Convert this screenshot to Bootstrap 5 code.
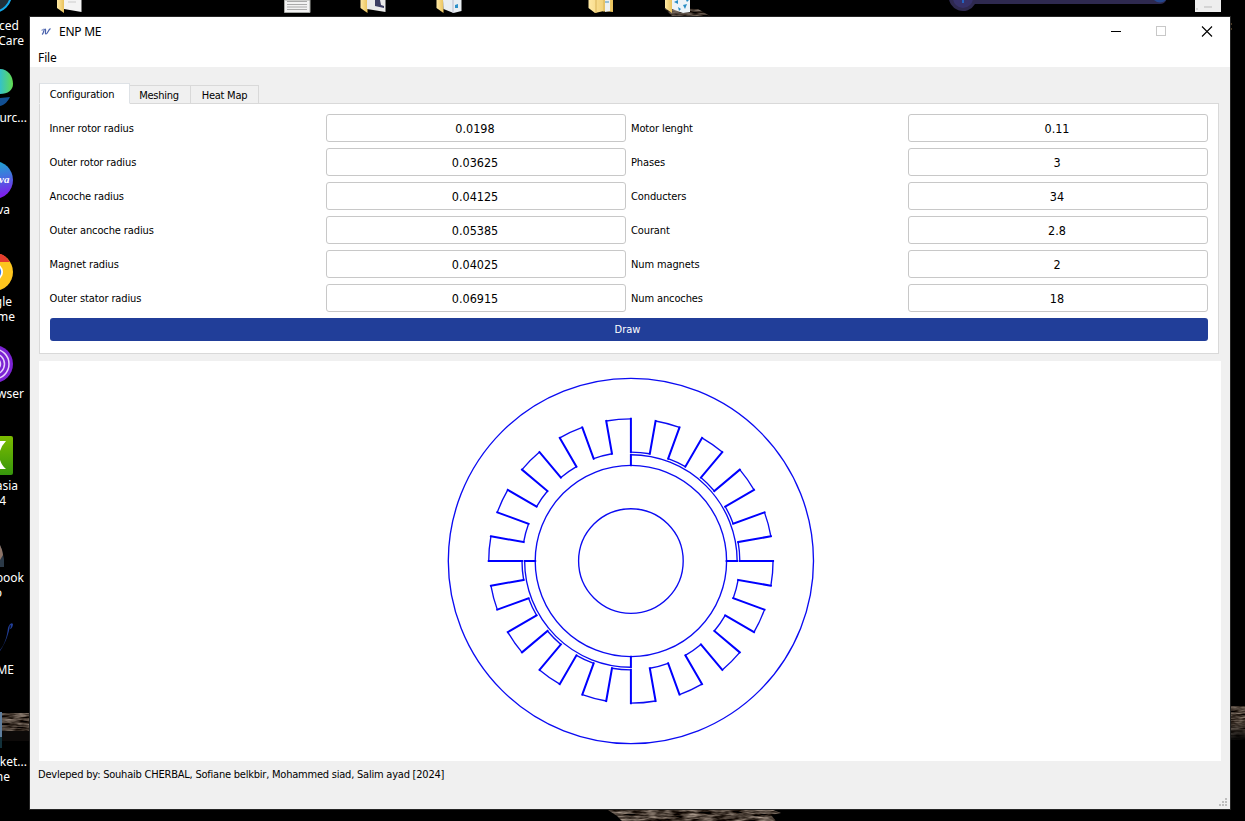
<!DOCTYPE html>
<html lang="en">
<head>
<meta charset="utf-8">
<title>ENP ME</title>
<link href="https://cdn.jsdelivr.net/npm/bootstrap@5.3.0/dist/css/bootstrap.min.css" rel="stylesheet">
<style>
body{width:1245px;height:821px;background:#000;font-family:"DejaVu Sans Condensed","DejaVu Sans",sans-serif;font-stretch:condensed;font-size:11px;line-height:14px;color:#000}
.desktop{width:1245px;height:821px}
.wall{left:0;top:0}
.desk-label{font:12px/15px "Noto Sans","Open Sans",sans-serif;color:#fff;white-space:pre;text-align:right}
.app{left:30px;top:17px;width:1200px;height:792px;background:#f0f0f0;outline:1px solid #252525}
.titlebar{height:30px;font:12px/30px "Noto Sans","Open Sans",sans-serif}
.titlebar .app-name{margin-left:9px;letter-spacing:-.25px}
.menubar{height:20px;font:12px/22px "Noto Sans","Open Sans",sans-serif;padding-left:8px;letter-spacing:-.1px}
.tabs-row{margin:16px 0 0 9px;height:21px}
.nav-tabs.tabs-row{border:0}
.tabs-row .nav-link{border:1px solid #d9d9d9;border-left:0;border-radius:0;margin:0;padding:0 2px 0 0;color:#000;height:19px;line-height:19px;text-align:center;letter-spacing:-.25px;background:#f0f0f0}
.tabs-row .nav-link.active{width:91px;height:21px;line-height:21px;border-left:1px solid #d9d9d9;border-bottom-color:#fff;background:#fff;color:#000;z-index:1;padding-right:5px;letter-spacing:-.2px}
.pane{margin:-1px 11px 0 9px;height:251px;border:1px solid #d9d9d9;background:#fff;padding:10px}
.fields{display:grid;grid-template-columns:276px 300px 282px 300px;grid-auto-rows:28px;row-gap:6px}
.fields label{line-height:30px;letter-spacing:-.12px;margin-left:-.5px}
.fields label.second{padding-left:5.5px}
.fields .form-control{height:28px;min-height:0;padding:0 2px 0 0;border:1px solid #c8c8c8;border-radius:3px;text-align:center;font-size:12.5px;line-height:26px;color:#000}
.btn-draw{margin-top:6px;height:23px;width:100%;padding:0 3px 0 0;border:0;border-radius:3px;background:#213e99;color:#fff;font-size:11px;line-height:24px}
.plot{margin:7px 9px 0 9px;height:400px;background:#fff}
.credits{padding:7px 0 0 8px;letter-spacing:-.22px}
.grip{right:2px;bottom:2px}
</style>
</head>
<body>
<div class="desktop position-relative overflow-hidden">
<svg class="wall position-absolute" width="1245" height="821" viewBox="0 0 1245 821">
  <defs>
    <linearGradient id="edge" x1="0" x2="1"><stop offset="0" stop-color="#35c1c9"/><stop offset="1" stop-color="#62dc50"/></linearGradient>
    <linearGradient id="canva" x1="0" y1="0" x2=".2" y2="1"><stop offset="0" stop-color="#12b5cc"/><stop offset=".5" stop-color="#3f77dd"/><stop offset="1" stop-color="#7d20ec"/></linearGradient>
    <linearGradient id="green" x1="0" y1="0" x2="0" y2="1"><stop offset="0" stop-color="#7cbc00"/><stop offset="1" stop-color="#36960c"/></linearGradient>
    <linearGradient id="folder" x1="0" x2="1"><stop offset="0" stop-color="#ffe9a5"/><stop offset="1" stop-color="#e9c25c"/></linearGradient>
    <linearGradient id="shade" x1="0" y1="0" x2="0" y2="1"><stop offset="0" stop-color="#000" stop-opacity="0"/><stop offset="1" stop-color="#000"/></linearGradient>
    <filter id="rock" x="0" y="0" width="1" height="1" color-interpolation-filters="sRGB"><feTurbulence type="fractalNoise" baseFrequency=".07 .42" numOctaves="3" seed="4"/><feColorMatrix values="1.1 0 0 0 -.26  1.05 0 0 0 -.28  1 0 0 0 -.29  0 0 0 0 1"/><feComposite in2="SourceGraphic" operator="in"/></filter>
  </defs>
  <!-- wallpaper rocks -->
  <rect x="0" y="713" width="30" height="18" fill="#54453d" filter="url(#rock)"/>
  <rect y="731" width="30" height="10" fill="#0d0a09"/>
  <rect x="1231" y="706" width="14" height="34" fill="#54453d" filter="url(#rock)"/>
  <rect x="1231" y="722" width="14" height="19" fill="url(#shade)"/>
  <path d="M608 810h165l8 3-10 2 5 6H622l-5-5z" fill="#54453d" filter="url(#rock)"/>
  <path d="M664 8l8 8h38l-12-7z" fill="#54453d" filter="url(#rock)"/>
  <path d="M1230 24h2M1230 29h2M1230 44h1" stroke="#957449"/>
  <!-- left column icons -->
  <circle cx="-7" cy="-6" r="18" fill="#21303a" stroke="#14a9ea" stroke-width="2"/>
  <path d="M0 69c8 0 13 7 13 15 0 6-5 10-13 10z" fill="url(#edge)"/>
  <path d="M0 98c4 0 7-1 10-1-2 4-5 8-10 9z" fill="#114f93"/>
  <circle cx="-6" cy="180" r="19" fill="url(#canva)"/>
  <text x="-1" y="183" font-family="Liberation Serif,serif" font-style="italic" font-weight="bold" font-size="11" fill="#fff">va</text>
  <circle cx="-6" cy="272" r="19" fill="#fdc51e"/>
  <path d="M0 254c5 1 7 4 10 8H0z" fill="#e43c2e"/>
  <circle cx="-6" cy="272" r="9" fill="#fff"/><circle cx="-6" cy="272" r="7.2" fill="#327be8"/>
  <circle cx="-6" cy="364" r="19" fill="#7b22d3"/>
  <g fill="none" stroke="#e7d2fa" stroke-width="1.5"><circle cx="-6" cy="364" r="15"/><circle cx="-6" cy="364" r="10.500"/><circle cx="-6" cy="364" r="6.500"/></g>
  <path d="M0 436h11q2 0 2 2v35q0 2-2 2H0z" fill="url(#green)"/>
  <path d="M0 441h6q-4 4-6 10zM0 460q2 6 6 9H0z" fill="#fff"/>
  <path d="M0 545l2 5 2 9v8H0z" fill="#2b3947"/><path d="M0 545l2 5 1 5-3 5z" fill="#8d7468"/>
  <path d="M0 650c5-6 7-14 8-22 1-3 3-6 5-4 0 3-2 5-3 5 1-2 1-4 0-4-1 8-4 17-10 26z" fill="#213e99"/>
  <path d="M0 712h2v25H0z" fill="#5f7e9e"/><path d="M0 737h2v11H0z" fill="#12303a"/>
  <!-- top row icons -->
  <path d="M57 0h7v13l-7-5z" fill="url(#folder)"/><path d="M64 0h17.500v12L64 9z" fill="#f4f4f4"/><path d="M68 2h8" stroke="#ccc"/>
  <path d="M284.500 0h25.500v12.500h-25.500z" fill="#f2f2f2" stroke="#a8aaa6"/><path d="M287 1.500h20M287 4.500h20M287 7h20M287 9.500h20" stroke="#aaa"/>
  <path d="M360.500 0h7v13l-7-5z" fill="url(#folder)"/><path d="M367 0h18.500v12L367 9z" fill="#e9e9e9"/><path d="M375 0h5l1 5 3 1v2l-9-2z" fill="#3b3d62"/>
  <path d="M436.500 0h7v13l-7-5z" fill="url(#folder)"/><path d="M443 0h18.500v11l-8 2-10-4z" fill="#e9eef2"/><path d="M453 0v13" stroke="#bbc"/><path d="M455 5l3-1v4h-3z" fill="#2e90c8"/>
  <path d="M588.500 0H613v12l-9-1-9 2-6.500-5z" fill="url(#folder)"/><path d="M596 0v13M604 0v12" stroke="#d9b45a"/><path d="M605 0h5v11l-5 1z" fill="#edf0f2"/><path d="M605 2h4" stroke="#4390c0"/>
  <path d="M665 0h7v13l-7-5z" fill="url(#folder)"/><path d="M672 0h18v12l-7 1-11-4z" fill="#edf4f8"/><path d="M674 2l4-2v4zM678 7l3 2-2 2zM683 5l4-1-2 5zM686 0h3l-2 2z" fill="#2a8ec4"/>
  <path d="M949-5a14 14 0 0 0 26 9h185q6 0 7-7z" fill="#2e294f"/><circle cx="963" cy="-2" r="10" fill="#363169"/><path d="M963 0v3" stroke="#2563c0" stroke-width="2"/><path d="M1154 0h12q-6 5-12 0z" fill="#24468e"/>
  <path d="M1195 0h26v12h-26z" fill="#eee"/><path d="M1196 9h2M1204 7h8" stroke="#bbb"/>
</svg>
<div class="desk-label position-absolute" style="right:1226px;top:18px">ced</div>
<div class="desk-label position-absolute" style="right:1221px;top:33px">Care</div>
<div class="desk-label position-absolute" style="right:1218px;top:110px">urc...</div>
<div class="desk-label position-absolute" style="right:1235px;top:202px">va</div>
<div class="desk-label position-absolute" style="right:1233px;top:294px">gle</div>
<div class="desk-label position-absolute" style="right:1230px;top:309px">me</div>
<div class="desk-label position-absolute" style="right:1221px;top:386px">wser</div>
<div class="desk-label position-absolute" style="right:1227px;top:478px">asia</div>
<div class="desk-label position-absolute" style="right:1239px;top:493px">4</div>
<div class="desk-label position-absolute" style="right:1221px;top:570px">book</div>
<div class="desk-label position-absolute" style="right:1243px;top:585px">o</div>
<div class="desk-label position-absolute" style="right:1231px;top:662px">ME</div>
<div class="desk-label position-absolute" style="right:1218px;top:754px">rket...</div>
<div class="desk-label position-absolute" style="right:1235px;top:769px">ne</div>

<main class="app position-absolute">
  <header class="bg-white">
    <div class="titlebar d-flex">
      <svg width="12" height="30" class="ms-2" viewBox="0 0 12 30" style="overflow:visible"><g fill="none" stroke="#4a62ad" stroke-width="1.200"><path d="M4 17.500c2-1 1.500-5.500 3-5.500s-.5 5 1 5 2-4 4.500-5.500"/><path d="M3.500 13.500l2.500-1.500" stroke="#8c9bcc"/></g></svg>
      <span class="app-name">ENP ME</span>
      <svg class="ms-auto" width="120" height="30" viewBox="0 0 120 30"><path d="M1 14.500h10" stroke="#000"/><rect x="46.500" y="9.500" width="9" height="9" fill="none" stroke="#c8c8c8"/><path d="M92 9.500l10 10M102 9.500l-10 10" stroke="#000" stroke-width="1.100"/></svg>
    </div>
    <nav class="menubar">File</nav>
  </header>
  <div class="nav nav-tabs tabs-row d-flex flex-nowrap align-items-end">
    <a class="nav-link active">Configuration</a>
    <a class="nav-link" style="width:61px">Meshing</a>
    <a class="nav-link" style="width:68px;padding:0">Heat Map</a>
  </div>
  <section class="pane">
    <div class="fields">
      <label>Inner rotor radius</label><input class="form-control" value="0.0198"><label class="second">Motor lenght</label><input class="form-control" value="0.11">
      <label>Outer rotor radius</label><input class="form-control" value="0.03625"><label class="second">Phases</label><input class="form-control" value="3">
      <label>Ancoche radius</label><input class="form-control" value="0.04125"><label class="second">Conducters</label><input class="form-control" value="34">
      <label>Outer ancoche radius</label><input class="form-control" value="0.05385"><label class="second">Courant</label><input class="form-control" value="2.8">
      <label>Magnet radius</label><input class="form-control" value="0.04025"><label class="second">Num magnets</label><input class="form-control" value="2">
      <label>Outer stator radius</label><input class="form-control" value="0.06915"><label class="second">Num ancoches</label><input class="form-control" value="18">
    </div>
    <button class="btn btn-draw d-block">Draw</button>
  </section>
  <section class="plot">
    <svg class="d-block" width="1182" height="400" viewBox="39 361 1182 400">
      <g fill="none" stroke="#00f">
        <g stroke-width="1.350" stroke="#0b0bf2"><circle cx="630.900" cy="561" r="182.600"/><circle cx="630.900" cy="561" r="95.700"/><circle cx="630.900" cy="561" r="52.300"/><path id="arcs"/></g>
        <path id="radials" stroke-width="2" stroke-linecap="square"/>
      </g>
    </svg>
  </section>
  <footer class="credits">Devleped by: Souhaib CHERBAL, Sofiane belkbir, Mohammed siad, Salim ayad [2024]</footer>
  <svg class="grip position-absolute" width="10" height="10" viewBox="0 0 10 10" fill="#bfbfbf"><path d="M7 1h2v2H7zM4 4h2v2H4zM7 4h2v2H7zM1 7h2v2H1zM4 7h2v2H4zM7 7h2v2H7z"/></svg>
</main>
</div>
<script>
// Motor cross-section: radii in metres scaled to pixels, angles clockwise from the top
const K = 2640, cx = 630.9, cy = 561;
const rotor = .03625 * K, magnet = .04025 * K, slotIn = .04125 * K, slotOut = .05385 * K;
const at = (r, a) => (cx + r * Math.sin(a * Math.PI / 180)).toFixed(2) + ' ' + (cy - r * Math.cos(a * Math.PI / 180)).toFixed(2);
const arc = (r, a, b) => `M${at(r, a)}A${r} ${r} 0 0 1 ${at(r, b)}`;
const ray = (r, s, a) => `M${at(r, a)}L${at(s, a)}`;
let arcs = arc(magnet, 0, 90) + arc(magnet, 180, 270), rays = '';
for (let a = 0; a < 360; a += 20) {
  arcs += arc(slotIn, a, a + 10) + arc(slotOut, a + 10, a + 20);
  rays += ray(slotIn, slotOut, a) + ray(slotIn, slotOut, a + 10);
}
for (let a = 0; a < 360; a += 90) rays += ray(rotor, magnet, a);
document.getElementById('arcs').setAttribute('d', arcs);
document.getElementById('radials').setAttribute('d', rays);
</script>
<script src="https://cdn.jsdelivr.net/npm/bootstrap@5.3.0/dist/js/bootstrap.bundle.min.js"></script>
</body>
</html>
